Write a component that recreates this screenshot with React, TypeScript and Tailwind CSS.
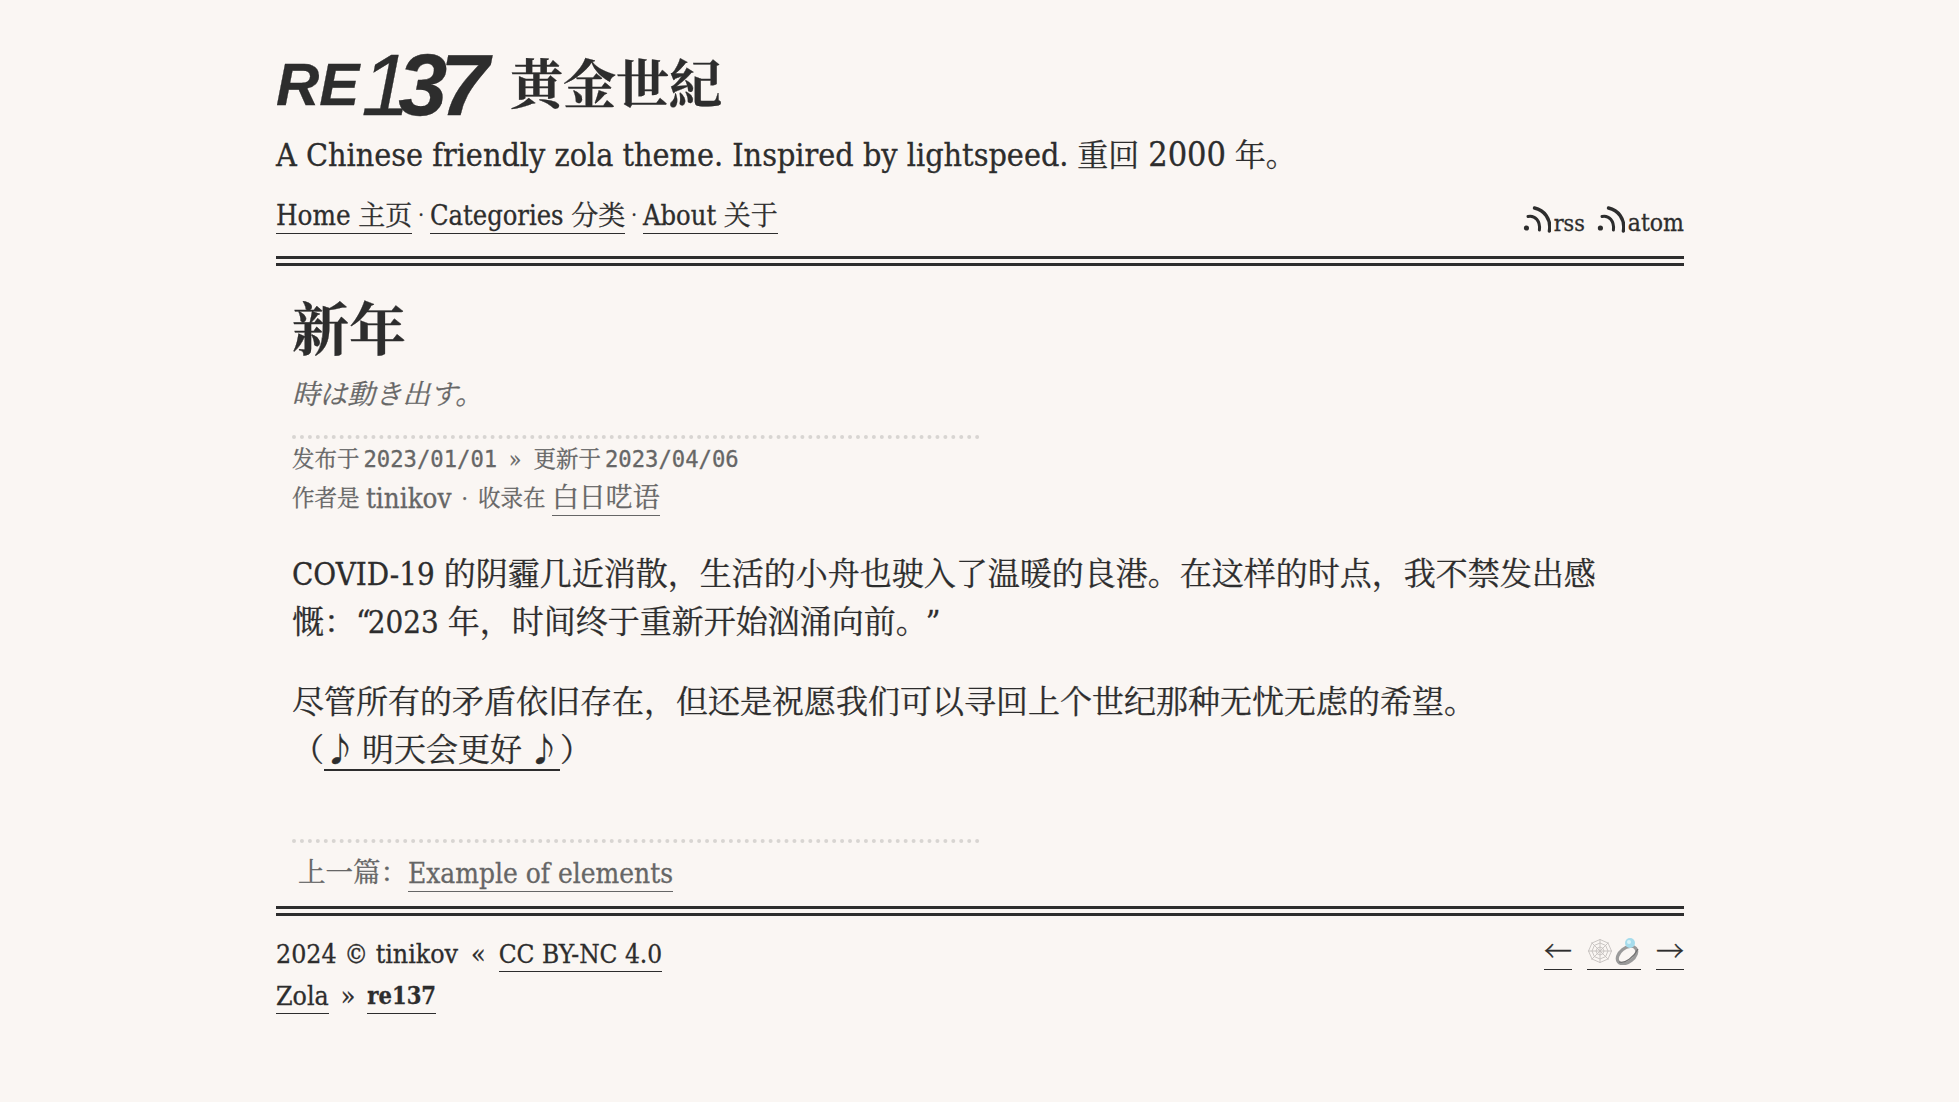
import React from 'react';

const serif = 'font-["DejaVu_Serif_Condensed","DejaVu_Serif","Noto_Serif_CJK_SC","Noto_Sans_CJK_SC",serif]';
const cjk = 'font-["Noto_Serif_CJK_SC","Noto_Sans_CJK_SC",serif]';
const mono = 'font-["DejaVu_Sans_Mono",monospace]';

const FeedIcon = () => (
  <svg viewBox="0 0 28 28" className="w-[28px] h-[28px] shrink-0 mb-[3px]" fill="none" stroke="#2d2d2d" strokeLinecap="round">
    <circle cx="3.4" cy="22" r="2.6" fill="#2d2d2d" stroke="none" />
    <path d="M5 10.5 C12 9 17.5 15 16.4 24" strokeWidth="3" />
    <path d="M11.5 2 C21 4 28.5 13 26.4 25" strokeWidth="3.4" />
  </svg>
);

const WebIcon = () => (
  <svg viewBox="0 0 26 26" className="w-[26px] h-[26px]" fill="none" stroke="#c4c0bd" strokeWidth="0.9">
    <path d="M13 1v24M1 13h24M4.5 4.5l17 17M21.5 4.5l-17 17" />
    <path d="M13 1.5L21 5l3.5 8-3.5 8-8 3.5L5 21l-3.5-8L5 5z" />
    <path d="M13 5l5.6 2.4L21 13l-2.4 5.6L13 21l-5.6-2.4L5 13l2.4-5.6z" />
    <path d="M13 9l2.8 1.2L17 13l-1.2 2.8L13 17l-2.8-1.2L9 13l1.2-2.8z" />
  </svg>
);

const RingIcon = () => (
  <svg viewBox="0 0 26 28" className="w-[26px] h-[28px]">
    <ellipse cx="12" cy="18" rx="11" ry="7" transform="rotate(-38 12 18)" fill="none" stroke="#9a9a9a" strokeWidth="3.2" />
    <path d="M4 25 C10 27 19 20 23 12" fill="none" stroke="#707070" strokeWidth="1.2" />
    <circle cx="15" cy="6" r="5" fill="#a6dcec" />
    <circle cx="14" cy="5" r="2" fill="#d8f2f8" />
  </svg>
);

export default function App() {
  return (
    <div className={`min-h-screen bg-[#faf6f3] text-[#2d2d2d] [-webkit-text-stroke:0.3px] ${serif}`}>
      <div className="ml-[276px] w-[1408px] pt-[48px]">
        <header>
          <div className="h-[74px] flex items-center">
            <span className='font-["Liberation_Sans",sans-serif] italic inline-flex items-center w-[210px] leading-none'>
              <span className="text-[60px] font-bold tracking-[0px]">RE</span>
              <span className="text-[88px] font-normal ml-[2px] tracking-[-16px]">1</span>
              <span className="text-[88px] font-bold ml-[4px] tracking-[-7px]">37</span>
            </span>
            <span className="text-[53px] font-bold leading-none ml-[24px]">黄金世紀</span>
          </div>
          <p className="mt-[9px] h-[48px] leading-[48px] text-[31px] whitespace-nowrap">
            <span className="text-[32px] leading-none">A Chinese friendly zola theme. Inspired by lightspeed.</span> 重回 <span className="text-[34px] leading-none">2000</span> 年。
          </p>
          <nav className="mt-[12px] h-[48px] flex items-center justify-between">
            <div className="text-[27px] flex items-center">
              <a className="border-b border-[#2d2d2d] leading-[34px] mt-[2px]"><span className="text-[27.5px]">Home</span> 主页</a>
              <span className="mx-[6px] text-[20px]">·</span>
              <a className="border-b border-[#2d2d2d] leading-[34px] mt-[2px]"><span className="text-[27px]">Categories</span> 分类</a>
              <span className="mx-[6px] text-[20px]">·</span>
              <a className="border-b border-[#2d2d2d] leading-[34px] mt-[2px]"><span className="text-[27px]">About</span> 关于</a>
            </div>
            <div className="flex items-center gap-[12px] mt-[12px]">
              <span className="flex items-end text-[23px]"><FeedIcon /><span className="leading-[28px] ml-[3px]">rss</span></span>
              <span className="flex items-end text-[24.5px]"><FeedIcon /><span className="leading-[28px] ml-[3px]">atom</span></span>
            </div>
          </nav>
          <div className="mt-[17px] border-b-[10px] border-double border-[#2d2d2d]" />
        </header>

        <main className="pl-[16px]">
          <h1 className="mt-[28px] text-[57px] leading-[72px] font-bold">新年</h1>
          <p className="mt-[11px] text-[27.6px] leading-[36px] italic text-[#666]">時は動き出す。</p>
          <div className="mt-[22px] w-[688px] border-t-4 border-dotted border-[#d8d5d2]" />
          <p className="mt-[1px] h-[38px] leading-[38px] text-[22.5px] text-[#666] whitespace-nowrap">
            发布于<span className={`ml-[4px] text-[22.2px] ${mono}`}>2023/01/01</span><span className="mx-[12px]">»</span>更新于<span className={`ml-[4px] text-[22.2px] ${mono}`}>2023/04/06</span>
          </p>
          <p className="mt-[1px] h-[38px] leading-[38px] text-[22.5px] text-[#666] whitespace-nowrap flex items-center">
            作者是&nbsp;<span className="text-[27.5px]">tinikov</span><span className="mx-[10px]">·</span>收录在&nbsp;
            <a className="border-b border-[#666] text-[27px] leading-[34px]">白日呓语</a>
          </p>
          <p className="mt-[33px] text-[32px] leading-[48px] whitespace-nowrap">
            <span className="text-[31px]">COVID-19</span> 的阴霾几近消散，生活的小舟也驶入了温暖的良港。在这样的时点，我不禁发出感
            <br />
            慨：“<span className="text-[31px] -ml-[3px]">2023</span> 年，时间终于重新开始汹涌向前。<span className="ml-[14px]">”</span>
          </p>
          <p className="mt-[32px] text-[32px] leading-[48px] whitespace-nowrap">
            尽管所有的矛盾依旧存在，但还是祝愿我们可以寻回上个世纪那种无忧无虑的希望。
            <br />
            （<a className="border-b-2 border-[#2d2d2d]"><span className={`mr-[6px] leading-none ${cjk}`}>♪</span>明天会更好<span className={`ml-[6px] leading-none ${cjk}`}>♪</span></a>）
          </p>
          <div className="mt-[65px] w-[688px] border-t-4 border-dotted border-[#d8d5d2]" />
          <p className="mt-[6px] h-[48px] text-[27.5px] text-[#666] flex items-center pl-[6px] whitespace-nowrap">
            上一篇：<a className="border-b border-[#666] leading-[34px] text-[27.8px] mt-[2px]">Example of elements</a>
          </p>
        </main>

        <div className="mt-[9px] border-b-[10px] border-double border-[#2d2d2d]" />

        <footer className="mt-[17px] flex justify-between text-[26.5px]">
          <div>
            <div className="h-[42px] flex items-center whitespace-nowrap">
              2024 © tinikov<span className="mx-[13px]">«</span><a className="border-b border-[#2d2d2d] leading-[34px] text-[26px]">CC BY-NC 4.0</a>
            </div>
            <div className="h-[42px] flex items-center whitespace-nowrap">
              <a className="border-b border-[#2d2d2d] leading-[34px]">Zola</a><span className="mx-[12px]">»</span><a className="border-b border-[#2d2d2d] leading-[34px] font-bold text-[23.5px]">re137</a>
            </div>
          </div>
          <div className="flex items-start gap-[15px] h-[42px]">
            <a className={`border-b border-[#2d2d2d] h-[37px] w-[28px] pb-[3px] flex items-center justify-center text-[28px] leading-none ${cjk}`}>←</a>
            <a className="border-b border-[#2d2d2d] h-[37px] w-[54px] flex items-center justify-between"><WebIcon /><RingIcon /></a>
            <a className={`border-b border-[#2d2d2d] h-[37px] w-[28px] pb-[3px] flex items-center justify-center text-[28px] leading-none ${cjk}`}>→</a>
          </div>
        </footer>
      </div>
    </div>
  );
}
